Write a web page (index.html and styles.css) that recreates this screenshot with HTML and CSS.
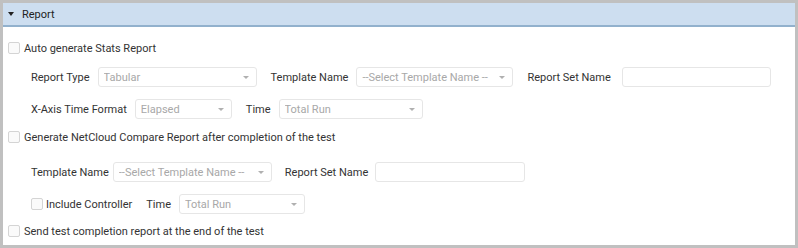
FILE: index.html
```html
<!DOCTYPE html>
<html>

<head>
    <title>Report</title>
    <link rel="stylesheet" href="styles.css">
</head>

<body>
    <div class="panel">
        <div class="panel-head">
            <span class="caret"></span>
            <span class="panel-title">Report</span>
        </div>

        <div class="panel-body">
            <label class="check-row">
                <span class="check"></span>
                <span>Auto generate Stats Report</span>
            </label>

            <div class="field-row first">
                <span class="label">Report Type</span>
                <div class="select w159"><span>Tabular</span><i class="arrow"></i></div>
                <span class="label">Template Name</span>
                <div class="select w157"><span>--Select Template Name --</span><i class="arrow"></i></div>
                <span class="label wide">Report Set Name</span>
                <div class="input w149"></div>
            </div>

            <div class="field-row">
                <span class="label">X-Axis Time Format</span>
                <div class="select w97"><span>Elapsed</span><i class="arrow"></i></div>
                <span class="label">Time</span>
                <div class="select w144"><span>Total Run</span><i class="arrow"></i></div>
            </div>

            <label class="check-row second">
                <span class="check"></span>
                <span>Generate NetCloud Compare Report after completion of the test</span>
            </label>

            <div class="field-row third">
                <span class="label">Template Name</span>
                <div class="select w159"><span>--Select Template Name --</span><i class="arrow"></i></div>
                <span class="label set-name">Report Set Name</span>
                <div class="input w150"></div>
            </div>

            <div class="field-row">
                <label class="inline-check">
                    <span class="check"></span>
                    <span>Include Controller</span>
                </label>
                <span class="label">Time</span>
                <div class="select w125"><span>Total Run</span><i class="arrow"></i></div>
            </div>

            <label class="check-row last">
                <span class="check"></span>
                <span>Send test completion report at the end of the test</span>
            </label>
        </div>
    </div>
</body>

</html>
```

FILE: styles.css
```css
* {
    box-sizing: border-box;
}

body {
    margin: 0;
    background-color: #fff;
    font-family: Roboto, "Liberation Sans", Arial, sans-serif;
    font-size: 11px;
    color: #333;
}

.panel {
    width: 798px;
    height: 248px;
    border: 3px solid #c0c0c0;
    background-color: #fff;
}

.panel-head {
    height: 24px;
    background-color: #cddef0;
    border-bottom: 2px solid #92b1cd;
    display: flex;
    align-items: center;
    padding-left: 5px;
}

.caret {
    width: 0;
    height: 0;
    border-left: 3px solid transparent;
    border-right: 3px solid transparent;
    border-top: 4px solid #222;
    margin-right: 8px;
}

.panel-title {
    color: #222;
}

.panel-body {
    padding: 14px 5px 0;
}

.check-row {
    display: flex;
    align-items: center;
    height: 14px;
    white-space: nowrap;
}

.check-row.second {
    margin-top: 11px;
}

.check-row.last {
    margin-top: 10px;
}

.check {
    width: 12px;
    height: 12px;
    border: 1px solid #d4d4d4;
    border-radius: 2px;
    background-color: #fafafa;
    margin-right: 4px;
    flex-shrink: 0;
}

.field-row {
    display: flex;
    align-items: center;
    height: 20px;
    margin-top: 12px;
    padding-left: 23px;
    white-space: nowrap;
}

.field-row.third {
    margin-top: 18px;
}

.label {
    margin-right: 8px;
    flex-shrink: 0;
}

.label.wide {
    margin-right: 11px;
}

.third .label {
    margin-right: 4px;
}

.third .label.set-name {
    margin-right: 7px;
}

.third .select {
    margin-right: 13px;
}

.select,
.input {
    height: 20px;
    border: 1px solid #e6e6e6;
    border-radius: 3px;
    margin-right: 14px;
    display: flex;
    align-items: center;
    padding: 0 5px;
    color: #a8a8a8;
    background-color: #fff;
    flex-shrink: 0;
}

.select span {
    flex: 1;
    overflow: hidden;
}

.arrow {
    width: 0;
    height: 0;
    border-left: 3px solid transparent;
    border-right: 3px solid transparent;
    border-top: 3px solid #b0b0b0;
    margin-right: 2px;
}

.inline-check {
    display: flex;
    align-items: center;
    margin-right: 14px;
}

.inline-check .check {
    margin-right: 3px;
}

.w97 { width: 97px; }
.w125 { width: 126px; }
.w144 { width: 144px; }
.w149 { width: 149px; }
.w150 { width: 150px; }
.w157 { width: 157px; }
.w159 { width: 159px; }
```
